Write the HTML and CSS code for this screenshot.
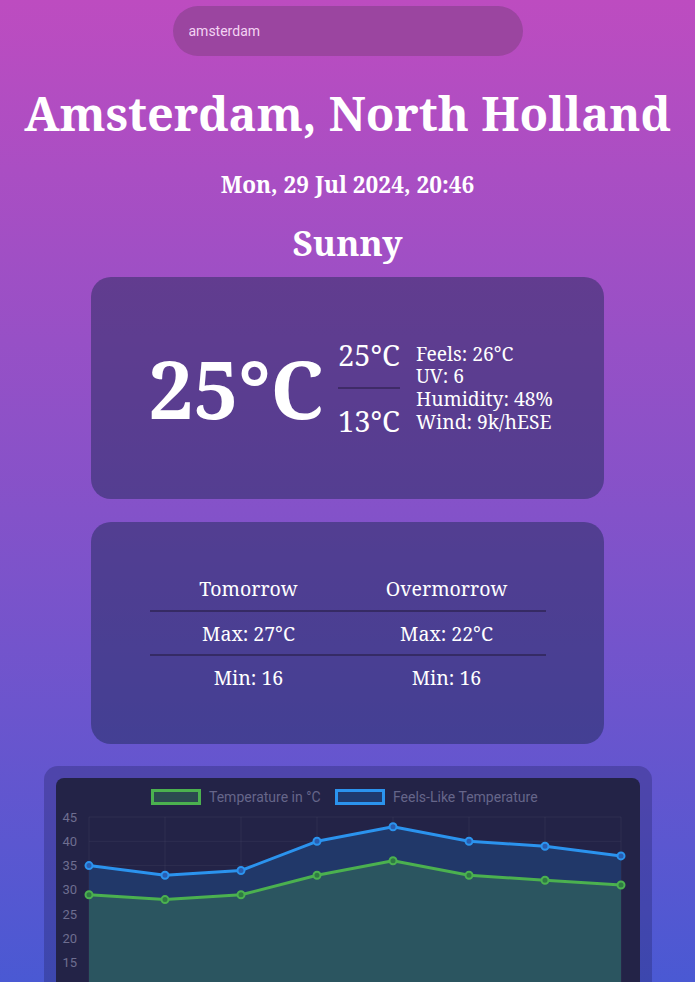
FILE: index.html
```html
<!DOCTYPE html>
<html lang="en">
<head>
<meta charset="utf-8">
<title>Weather</title>
<link rel="stylesheet" href="styles.css">
</head>
<body>
<main class="app">
  <input class="search" type="text" value="amsterdam">
  <h1 class="city">Amsterdam, North Holland</h1>
  <p class="date">Mon, 29 Jul 2024, 20:46</p>
  <h2 class="condition">Sunny</h2>

  <section class="card current">
    <div class="temp-now">25°C</div>
    <div class="hilo">
      <span class="hi">25°C</span>
      <span class="divider"></span>
      <span class="lo">13°C</span>
    </div>
    <ul class="details">
      <li>Feels: 26°C</li>
      <li>UV: 6</li>
      <li>Humidity: 48%</li>
      <li>Wind: 9k/hESE</li>
    </ul>
  </section>

  <section class="card forecast">
    <table class="forecast-table">
      <tr><td>Tomorrow</td><td>Overmorrow</td></tr>
      <tr><td>Max: 27°C</td><td>Max: 22°C</td></tr>
      <tr><td>Min: 16</td><td>Min: 16</td></tr>
    </table>
  </section>

  <section class="chart-card">
    <div class="chart">
      <svg width="584" height="290" viewBox="0 0 584 290" xmlns="http://www.w3.org/2000/svg">
        <g stroke="rgba(255,255,255,0.05)" stroke-width="1">
          <line x1="33" y1="39" x2="565" y2="39"/>
          <line x1="33" y1="63.3" x2="565" y2="63.3"/>
          <line x1="33" y1="87.6" x2="565" y2="87.6"/>
          <line x1="33" y1="111.9" x2="565" y2="111.9"/>
          <line x1="33" y1="136.2" x2="565" y2="136.2"/>
          <line x1="33" y1="160.5" x2="565" y2="160.5"/>
          <line x1="33" y1="184.8" x2="565" y2="184.8"/>
          <line x1="33" y1="209.1" x2="565" y2="209.1"/>
          <line x1="33" y1="233.4" x2="565" y2="233.4"/>
          <line x1="33" y1="39" x2="33" y2="258"/>
          <line x1="109" y1="39" x2="109" y2="258"/>
          <line x1="185" y1="39" x2="185" y2="258"/>
          <line x1="261" y1="39" x2="261" y2="258"/>
          <line x1="337" y1="39" x2="337" y2="258"/>
          <line x1="413" y1="39" x2="413" y2="258"/>
          <line x1="489" y1="39" x2="489" y2="258"/>
          <line x1="565" y1="39" x2="565" y2="258"/>
        </g>
        <g class="axis-labels" font-family="Roboto, sans-serif" font-size="13" fill="#6e6e90" text-anchor="end">
          <text x="21" y="43.5">45</text>
          <text x="21" y="67.8">40</text>
          <text x="21" y="92.1">35</text>
          <text x="21" y="116.4">30</text>
          <text x="21" y="140.7">25</text>
          <text x="21" y="165">20</text>
          <text x="21" y="189.3">15</text>
          <text x="21" y="213.6">10</text>
          <text x="21" y="237.9">5</text>
          <text x="21" y="262.2">0</text>
        </g>
        <g transform="translate(0,1)">
          <polygon fill="#213869" points="33,86.6 109,96.3 185,91.5 261,62.3 337,47.7 413,62.3 489,67.2 565,76.9 565,256.7 33,256.7"/>
          <polygon fill="#2b5560" points="33,115.8 109,120.6 185,115.8 261,96.3 337,81.7 413,96.3 489,101.2 565,106 565,256.7 33,256.7"/>
          <polyline fill="none" stroke="#2b93ee" stroke-width="3" stroke-linejoin="round" points="33,86.6 109,96.3 185,91.5 261,62.3 337,47.7 413,62.3 489,67.2 565,76.9"/>
          <polyline fill="none" stroke="#4bb14f" stroke-width="3" stroke-linejoin="round" points="33,115.8 109,120.6 185,115.8 261,96.3 337,81.7 413,96.3 489,101.2 565,106"/>
          <g fill="#2a5db0" stroke="#2b93ee" stroke-width="2">
            <circle cx="33" cy="86.6" r="3.5"/><circle cx="109" cy="96.3" r="3.5"/><circle cx="185" cy="91.5" r="3.5"/><circle cx="261" cy="62.3" r="3.5"/>
            <circle cx="337" cy="47.7" r="3.5"/><circle cx="413" cy="62.3" r="3.5"/><circle cx="489" cy="67.2" r="3.5"/><circle cx="565" cy="76.9" r="3.5"/>
          </g>
          <g fill="#2f7a44" stroke="#4bb14f" stroke-width="2">
            <circle cx="33" cy="115.8" r="3.5"/><circle cx="109" cy="120.6" r="3.5"/><circle cx="185" cy="115.8" r="3.5"/><circle cx="261" cy="96.3" r="3.5"/>
            <circle cx="337" cy="81.7" r="3.5"/><circle cx="413" cy="96.3" r="3.5"/><circle cx="489" cy="101.2" r="3.5"/><circle cx="565" cy="106" r="3.5"/>
          </g>
        </g>
        <rect x="96.5" y="12.5" width="47" height="13" fill="#2b4a50" stroke="#4bb14f" stroke-width="3"/>
        <text x="153" y="24" font-family="Roboto, sans-serif" font-size="14" fill="#66668a">Temperature in °C</text>
        <rect x="280.5" y="12.5" width="47" height="13" fill="#1f3a6e" stroke="#2b93ee" stroke-width="3"/>
        <text x="337" y="24" font-family="Roboto, sans-serif" font-size="14" fill="#66668a">Feels-Like Temperature</text>
      </svg>
    </div>
  </section>
</main>
</body>
</html>
```

FILE: styles.css
```css
* { box-sizing: border-box; }

html, body {
  margin: 0;
  padding: 0;
}

body {
  min-height: 100vh;
  background: linear-gradient(180deg, #bd4cc0 0%, #8452c9 52%, #4a59d3 100%);
  background-attachment: fixed;
  color: #ffffff;
  font-family: "Noto Serif", "DejaVu Serif", serif;
  overflow: hidden;
}

.app {
  display: flex;
  flex-direction: column;
  align-items: center;
}

.search {
  margin-top: 6px;
  width: 350px;
  height: 50px;
  border: none;
  outline: none;
  border-radius: 25px;
  background: #9b45a0;
  padding: 0 16px;
  font-family: Roboto, "Noto Sans", sans-serif;
  font-size: 14px;
  color: #f3d3f3;
}

.city {
  margin: 28px 0 0;
  font-size: 46.8px;
  line-height: 58px;
  font-weight: 700;
  text-align: center;
}

.date {
  margin: 28px 0 0;
  font-size: 22.6px;
  line-height: 30px;
  font-weight: 700;
}

.condition {
  margin: 21px 0 0;
  font-size: 35px;
  line-height: 44px;
  font-weight: 700;
}

.card {
  width: 513px;
  height: 222px;
  border-radius: 20px;
  background: rgba(24, 38, 78, 0.45);
  display: flex;
  align-items: center;
  justify-content: center;
}

.current {
  margin-top: 12px;
  padding-left: 6px;
}

.temp-now {
  font-size: 80px;
  font-weight: 700;
  line-height: 1;
  margin-right: 14px;
}

.hilo {
  display: flex;
  flex-direction: column;
  align-items: stretch;
  font-size: 29px;
  line-height: 32px;
  gap: 16px;
  margin-right: 16px;
}

.divider {
  height: 2px;
  background: rgba(40, 30, 70, 0.55);
}

.details {
  list-style: none;
  margin: 0;
  padding: 0;
  font-size: 19.3px;
  line-height: 22.7px;
}

.forecast {
  margin-top: 23px;
}

.forecast-table {
  width: 396px;
  border-collapse: collapse;
  font-size: 19.5px;
  text-align: center;
}

.forecast-table td {
  width: 50%;
  height: 44px;
  padding: 0;
}

.forecast-table tr:not(:last-child) td {
  border-bottom: 2px solid rgba(40, 30, 70, 0.6);
}

.chart-card {
  margin-top: 22px;
  width: 608px;
  padding: 12px;
  border-radius: 14px;
  background: rgba(30, 30, 90, 0.3);
}

.chart {
  background: #232347;
  border-radius: 8px;
  overflow: hidden;
}

.chart svg {
  display: block;
}
```
